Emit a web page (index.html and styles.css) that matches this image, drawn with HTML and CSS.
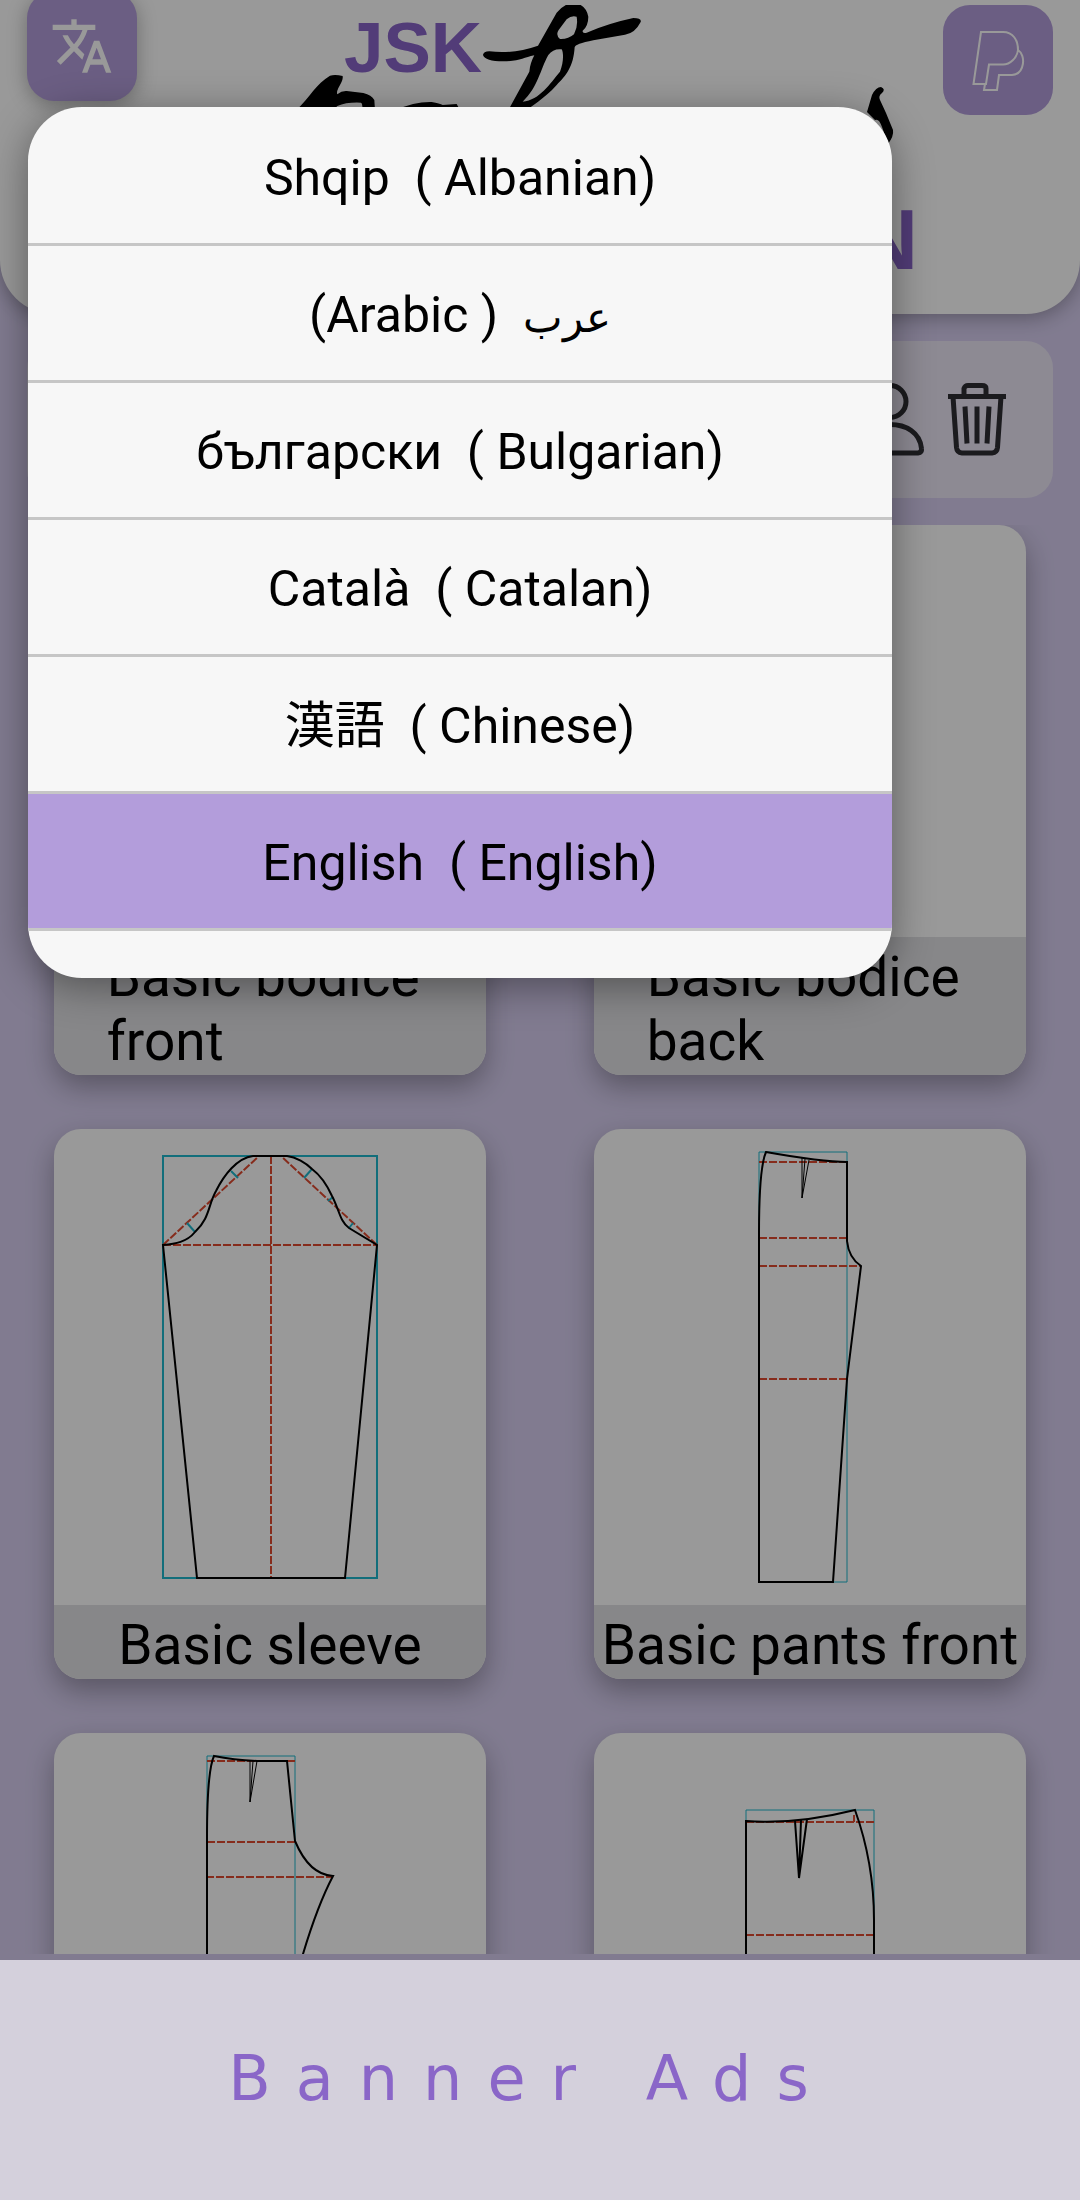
FILE: index.html
```
<!DOCTYPE html>
<html lang="en">
  <head>
    <meta charset="UTF-8" />
    <meta name="viewport" content="width=device-width, initial-scale=1.0" />
    <title>JSK patterns</title>
    <link rel="stylesheet" href="styles.css">
  </head>
  <body>
    <div class="app">
      <header class="header">
        <button class="icon-button lifted" aria-label="Language">
          <svg viewBox="0 0 24 24"><path fill="#fff" d="M12.87 15.07l-2.54-2.51.03-.03c1.74-1.94 2.98-4.17 3.71-6.53H17V4h-7V2H8v2H1v1.99h11.17C11.5 7.92 10.44 9.75 9 11.35 8.07 10.32 7.3 9.19 6.69 8h-2c.73 1.63 1.73 3.17 2.98 4.56l-5.09 5.02L4 19l5-5 3.11 3.11.76-2.04zM18.5 10h-2L12 22h2l1.12-3h4.75L21 22h2l-4.5-12zm-2.62 7l1.62-4.33L19.12 17h-3.24z"/></svg>
        </button>
        <svg class="logo" viewBox="137 5 806 300">
          <text class="logo-text" x="344" y="72" font-size="71">JSK</text>
          <text class="logo-text" x="856" y="269" font-size="86">N</text>
          <!-- handwritten flourish -->
          <g transform="translate(460 0) scale(.3333)">
            <path fill-rule="evenodd" d="M69 165Q70 155 88 154Q160 163 234 137L290 38Q315 8 345 9Q378 15 385 50Q385 78 368 92Q366 101 380 98Q445 70 520 54Q546 54 542 66Q525 100 495 104L400 121Q345 132 344 142C340 200 320 225 290 255C250 300 215 315 190 340L140 340L208 215Q210 190 223 166C190 173 180 184 130 184Q75 184 69 165ZM350 50Q335 45 320 58L296 90Q286 105 300 117Q325 118 342 103Q355 80 350 50ZM305 148Q280 145 265 165C240 210 235 260 188 305C240 300 270 250 300 215C310 190 312 160 305 148Z"/>
          </g>
          <g transform="translate(280 0) scale(.3333)">
            <path d="M50 330C90 290 110 250 150 227Q165 222 188 228Q190 238 180 255Q168 275 172 283Q185 272 200 273L250 279Q275 285 283 300L285 330L248 330Q247 308 243 308Q200 306 172 318L160 330ZM350 330Q400 305 455 306Q480 310 488 315L530 312L540 330Z"/>
          </g>
          <path d="M867 112L872 95Q876 87 881 87Q886 89 882 93Q878 96 880 100L886 113L893 130Q894 136 888 144L882 127Q879 118 875 120Z"/>
        </svg>
        <button class="icon-button" aria-label="PayPal">
          <svg viewBox="966 28 64 64" fill="none" stroke="#fff" stroke-width="2"><path d="M981 32H1003C1013 32 1018 40 1018 50C1017 58 1010 64.500 1003 64.500H989L986 84H973.500ZM1018 50C1026 55 1025 74 1012 75H999L997 90H984L985 84"/></svg>
        </button>
      </header>

      <nav class="toolbar">
        <button class="tool" aria-label="Profile">
          <svg viewBox="0 0 76 76"><circle cx="38" cy="21" r="16"/><path d="M7 68C8 52 22 44 38 44S68 52 69.500 68Q70 72 66 72.500H10Q6 72 7 68Z"/></svg>
        </button>
        <button class="tool" aria-label="Delete">
          <svg viewBox="0 0 76 76"><path d="M9 16H67M25 16V8Q26 5 29 5H43Q47 5 47 8V16M14 16L17.500 67Q18 72 23 72.500H53Q58 72 58.500 67L62 16M26 26L28 63M38 26V63M50 26L48 63"/></svg>
        </button>
      </nav>

      <main class="patterns">
        <a class="card" href="#">
          <div class="picture"></div>
          <div class="caption"><span>Basic bodice&nbsp;<br>front</span></div>
        </a>
        <a class="card" href="#">
          <div class="picture"></div>
          <div class="caption"><span>Basic bodice&nbsp;<br>back</span></div>
        </a>

        <a class="card" href="#">
          <div class="picture">
            <svg viewBox="0 0 432 476">
              <path class="frame" d="M109 27H323V449H109Z"/>
              <path class="guide" d="M109 116H323M217 27V449M109 116L205 27M323 116L227 27"/>
              <path class="frame" d="M177 42L184 49M133 94L141 103M258 40L250 49M274 72L279 68M299 94L295 99"/>
              <path class="outline" d="M109 116C121 115 133 113 141 103C156 89 154 76 162 62C170 46 183 29 199 27H233C242 28 252 34 258 40C266 46 273 56 278 67C285 80 286 93 295 99L323 116L291 449H143Z"/>
            </svg>
          </div>
          <div class="caption"><span>Basic sleeve</span></div>
        </a>
        <a class="card" href="#">
          <div class="picture">
            <svg viewBox="0 0 432 476">
              <path class="frame thin" d="M165 23H253V453H165Z"/>
              <path class="guide" d="M165 33H253M165 109H253M165 137H267M165 250H253"/>
              <path class="outline" d="M165 453V105C165 70 167 34 172 23C200 28 230 33 253 33V112C254 122 258 131 267 137L253 250L239 453Z"/>
              <path class="outline thin" d="M208 29V69L215 31M211 30L208 69"/>
            </svg>
          </div>
          <div class="caption"><span>Basic pants front</span></div>
        </a>

        <a class="card" href="#">
          <div class="picture">
            <svg viewBox="0 0 432 476">
              <path class="frame thin" d="M153 23H241V453H153Z"/>
              <path class="guide" d="M153 28H241M153 109H241M152 144H279"/>
              <path class="outline" d="M153 453V105C153 70 154 36 160 23Q180 27 203 28H233L241 108C249 127 260 142 279 143C269 162 258 191 249 221L241 260L228 453Z"/>
              <path class="outline thin" d="M196 28V69L203 28M199 28L196 69"/>
            </svg>
          </div>
        </a>
        <a class="card" href="#">
          <div class="picture">
            <svg viewBox="0 0 432 476">
              <path class="frame thin" d="M152 77H280V400H152Z"/>
              <path class="guide" d="M152 89H280M260 89V82M152 202H280"/>
              <path class="outline" d="M152 400V88C190 91 225 86 261 77Q280 130 280 187V400Z"/>
              <path class="outline" d="M201 88L205 145L213 86M207 87L205 145"/>
            </svg>
          </div>
        </a>
      </main>

      <div class="overlay"></div>

      <div class="languages" role="dialog" aria-label="Language">
        <ul>
          <li><button>Shqip&nbsp; ( Albanian)</button></li>
          <li><button dir="rtl"><span class="arabic">عرب</span>&nbsp; ( Arabic)</button></li>
          <li><button>български&nbsp; ( Bulgarian)</button></li>
          <li><button>Català&nbsp; ( Catalan)</button></li>
          <li><button>漢語&nbsp; ( Chinese)</button></li>
          <li><button class="selected">English&nbsp; ( English)</button></li>
        </ul>
      </div>
    </div>

    <footer class="banner">Banner Ads</footer>
  </body>
</html>
```
FILE: styles.css
```
* {
  box-sizing: border-box;
}
body {
  margin: 0;
  height: 100vh;
  display: flex;
  flex-direction: column;
  font-family: Roboto, "Noto Sans CJK JP", sans-serif;
  color: #000;
}
button {
  font: inherit;
  color: inherit;
  border: none;
  padding: 0;
  cursor: pointer;
}
.app {
  position: relative;
  flex: 1;
  min-height: 0;
  display: flex;
  flex-direction: column;
  padding-bottom: 6px;
  background: #d7cef0;
  overflow: hidden;
}
.header {
  display: flex;
  align-items: flex-start;
  padding: 5px 27px 9px;
  background: #fff;
  border-radius: 0 0 54px 54px;
  box-shadow: 0 4px 20px rgba(0, 0, 0, 0.3);
}
.logo {
  flex: 1;
  min-width: 0;
}
.logo-text {
  font-family: "Liberation Sans", Arial, sans-serif;
  font-weight: bold;
  fill: #8964c8;
}
.icon-button {
  width: 110px;
  height: 110px;
  display: flex;
  align-items: center;
  justify-content: center;
  background: #b39ddb;
  border-radius: 27px;
}
.icon-button svg {
  width: 64px;
  height: 64px;
}
.icon-button.lifted {
  margin-top: -14px;
  box-shadow: 0 4px 20px rgba(0, 0, 0, 0.3);
}
.toolbar {
  display: flex;
  justify-content: flex-end;
  align-items: center;
  gap: 11px;
  margin: 27px;
  padding: 39px 38px 41px;
  background: #ebe6f6;
  border-radius: 27px;
}
.tool {
  display: flex;
  background: none;
}
.tool svg {
  width: 76px;
  height: 77px;
  fill: none;
  stroke: #2e2d33;
  stroke-width: 5px;
}
.patterns {
  flex: 1;
  min-height: 0;
  display: grid;
  grid-template-columns: 1fr 1fr;
  grid-auto-rows: 550px;
  gap: 54px 108px;
  padding: 0 54px;
  overflow: hidden;
}
.card {
  display: flex;
  flex-direction: column;
  background: #fff;
  border-radius: 27px;
  box-shadow: 0 12px 28px rgba(0, 0, 0, 0.3);
  color: inherit;
  text-decoration: none;
}
.picture {
  flex: 1;
  min-height: 0;
}
.picture svg {
  display: block;
  width: 100%;
}
.caption {
  display: flex;
  justify-content: center;
  padding: 8px 0 2px;
  background: #e2e2e4;
  border-radius: 0 0 27px 27px;
  font-size: 55px;
  line-height: 64px;
}
.frame,
.guide,
.outline {
  fill: none;
  stroke-width: 2px;
}
.frame {
  stroke: #1fb8ce;
}
.guide {
  stroke: #e04a30;
  stroke-dasharray: 8 2;
}
.outline {
  stroke: #000;
}
.frame.thin,
.outline.thin {
  stroke-width: 1px;
}
.overlay {
  position: absolute;
  inset: 0;
  background: rgba(0, 0, 0, 0.4);
}
.languages {
  position: absolute;
  top: 107px;
  left: 28px;
  width: 80%;
  padding: 2px 0 47px;
  background: #f7f7f7;
  border-radius: 54px;
  box-shadow: 0 8px 40px rgba(0, 0, 0, 0.4);
  overflow: hidden;
}
.languages ul {
  list-style: none;
  margin: 0;
  padding: 0;
}
.languages li {
  border-bottom: 3px solid #c6c6c6;
}
.languages button {
  display: block;
  width: 100%;
  padding: 40px 0 36px;
  background: none;
  font-size: 50px;
  line-height: 58px;
}
.languages .selected {
  background: #b39ddb;
}
.arabic {
  font-size: 42px;
  line-height: 1;
}
.banner {
  height: 240px;
  display: flex;
  align-items: center;
  justify-content: center;
  padding: 0 18px 4px 0;
  background: #d4d0dc;
  color: #8a66c8;
  font-family: "DejaVu Sans", Verdana, sans-serif;
  font-size: 62px;
  letter-spacing: 25px;
}
```
